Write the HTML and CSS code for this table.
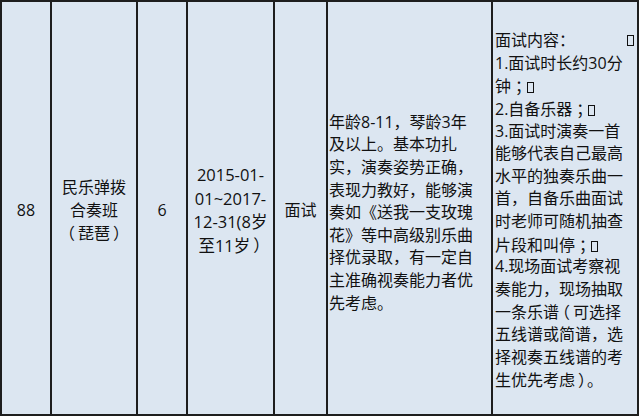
FILE: index.html
```html
<!DOCTYPE html>
<html lang="zh">
<head>
<meta charset="utf-8">
<title>民乐弹拨合奏班</title>
<link rel="stylesheet" href="styles.css">
</head>
<body>
<div class="table">
  <div class="cell center"><div class="line">88</div></div>
  <div class="cell center">
    <div class="line">民乐弹拨</div>
    <div class="line">合奏班</div>
    <div class="line"><span class="lp">（</span>琵琶<span class="rp">）</span></div>
  </div>
  <div class="cell center"><div class="line">6</div></div>
  <div class="cell center date">
    <div class="line">2015-01-</div>
    <div class="line">01~2017-</div>
    <div class="line">12-31(8岁</div>
    <div class="line">至11岁<span class="rp">）</span></div>
  </div>
  <div class="cell center"><div class="line">面试</div></div>
  <div class="cell text req">
    <div class="line">年龄8-11，琴龄3年</div>
    <div class="line">及以上。基本功扎</div>
    <div class="line">实，演奏姿势正确，</div>
    <div class="line">表现力教好，能够演</div>
    <div class="line">奏如《送我一支玫瑰</div>
    <div class="line">花》等中高级别乐曲</div>
    <div class="line">择优录取，有一定自</div>
    <div class="line">主准确视奏能力者优</div>
    <div class="line">先考虑。</div>
  </div>
  <div class="cell text content">
    <div class="line spread">面试内容：<span class="tofu"></span></div>
    <div class="line">1.面试时长约30分</div>
    <div class="line">钟<span class="semi">；</span><span class="tofu"></span></div>
    <div class="line">2.自备乐器<span class="semi">；</span><span class="tofu"></span></div>
    <div class="line">3.面试时演奏一首</div>
    <div class="line">能够代表自己最高</div>
    <div class="line">水平的独奏乐曲一</div>
    <div class="line">首，自备乐曲面试</div>
    <div class="line">时老师可随机抽查</div>
    <div class="line">片段和叫停<span class="semi">；</span><span class="tofu"></span></div>
    <div class="line">4.现场面试考察视</div>
    <div class="line">奏能力，现场抽取</div>
    <div class="line">一条乐谱<span class="lp wide">（</span>可选择</div>
    <div class="line">五线谱或简谱，选</div>
    <div class="line">择视奏五线谱的考</div>
    <div class="line">生优先考虑<span class="rp">）</span>。</div>
  </div>
</div>
</body>
</html>
```
FILE: styles.css
```css
html, body {
  margin: 0;
  padding: 0;
  background: #ffffff;
}

body {
  width: 640px;
  height: 417px;
  overflow: hidden;
  font-family: "Open Sans", "Noto Sans CJK SC", sans-serif;
  font-size: 16px;
  color: #111111;
}

.table {
  display: grid;
  grid-template-columns: 48px 84px 48px 85px 51px 163px 144px;
  grid-template-rows: 412px;
  gap: 2px;
  padding: 2px;
  width: 639px;
  height: 416px;
  box-sizing: border-box;
  background: #1e1e1e;
}

.cell {
  background: #dce6f1;
  display: flex;
  flex-direction: column;
  justify-content: center;
  line-height: 22.6px;
  white-space: nowrap;
  overflow: hidden;
  padding-top: 4px;
  box-sizing: border-box;
}

.center {
  align-items: center;
  text-align: center;
}

.date {
  line-height: 23.5px;
  font-size: 16.5px;
}

.text {
  align-items: stretch;
}

.req {
  padding-left: 1px;
  padding-top: 9px;
}

.content {
  padding-left: 2px;
  padding-right: 2px;
}

.line {
  height: 22.6px;
}

.date .line {
  height: 23.5px;
}

.spread {
  display: flex;
  justify-content: space-between;
  align-items: center;
}

.lp,
.rp,
.semi {
  font-family: "Noto Sans CJK SC", sans-serif;
  font-feature-settings: "halt" 1;
}

.lp {
  padding-left: 1px;
  padding-right: 3px;
}

.lp.wide {
  padding-left: 3px;
}

.rp {
  padding-left: 3px;
  padding-right: 1px;
}

.semi {
  padding-left: 4px;
  padding-right: 2px;
}

.tofu {
  display: inline-block;
  width: 5px;
  height: 9px;
  border: 1.5px solid #111111;
  vertical-align: -1px;
  margin-left: 2px;
}

.spread .tofu {
  margin-right: 1px;
}
```
